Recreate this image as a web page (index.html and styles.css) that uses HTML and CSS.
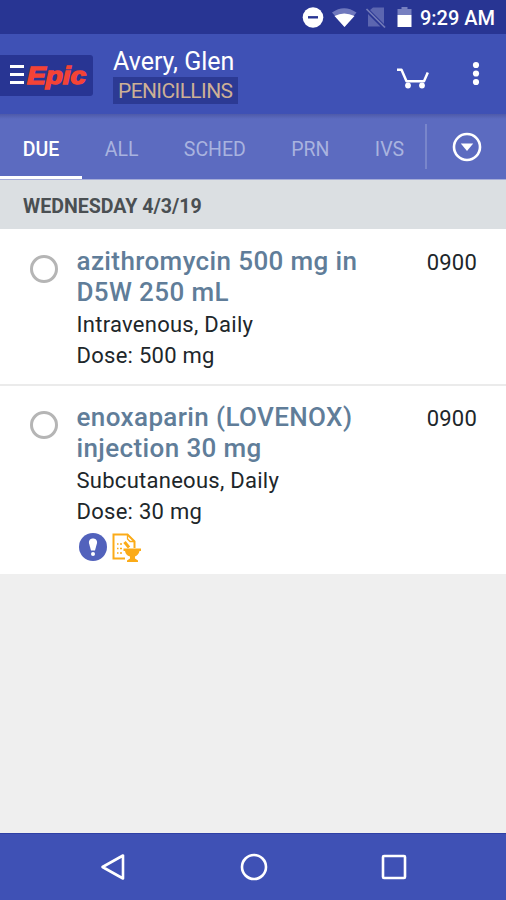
FILE: index.html
```html
<!DOCTYPE html>
<html lang="en">
<head>
  <meta charset="UTF-8" />
  <meta name="viewport" content="width=device-width, initial-scale=1.0" />
  <title>Medications Due</title>
  <link rel="stylesheet" href="styles.css">
</head>
<body>
  <div class="status-bar">
    <svg width="110" height="22" viewBox="0 0 110 22">
      <circle cx="11" cy="10.500" r="10.300" fill="#fff" />
      <path d="M6 10.300h10" stroke="#283593" stroke-width="2.400" />
      <path d="M30 5.500Q42 -3 54.500 5.500L42.500 20z" fill="#6f78bd" />
      <path d="M32.500 9Q42 4 52.500 9L42.500 20z" fill="#fff" />
      <path d="M68 3l3-2.500h11V17z M66 7l12.500 12.500H66z" fill="#5c66b0" />
      <path d="M64.500 2L83 20.500" stroke="#747cb8" stroke-width="1.700" />
      <path d="M95.500 8V2h4V0h6v2h4v6z" fill="#7780c0" />
      <path d="M95.500 8h14v12h-14z" fill="#fff" />
    </svg>
    <span class="clock">9:29 AM</span>
  </div>

  <div class="app-bar">
    <div class="logo">
      <div class="menu-lines"></div>
      <svg width="64" height="30" viewBox="0 0 64 30">
        <text class="logo-text" x="1" y="23.200" textLength="59" lengthAdjust="spacingAndGlyphs">Epic</text>
      </svg>
    </div>
    <div class="patient">
      <div class="patient-name">Avery, Glen</div>
      <div class="allergy">PENICILLINS</div>
    </div>
    <svg class="cart" width="34" height="22" viewBox="0 0 34 22" fill="none" stroke="#fff" stroke-width="2.500">
      <path d="M1 2.700h4.500l5 11.500h17.500L31.800 5.500" stroke-linejoin="round" />
      <circle cx="12" cy="18.500" r="2.900" fill="#fff" stroke="none" />
      <circle cx="26" cy="18.500" r="2.900" fill="#fff" stroke="none" />
    </svg>
    <svg class="more" width="8" height="26" viewBox="0 0 8 26" fill="#fff">
      <circle cx="4" cy="4" r="3.100" />
      <circle cx="4" cy="12.500" r="3.100" />
      <circle cx="4" cy="21" r="3.100" />
    </svg>
  </div>

  <div class="tabs">
    <div class="tab active">DUE</div>
    <div class="tab">ALL</div>
    <div class="tab">SCHED</div>
    <div class="tab">PRN</div>
    <div class="tab">IVS</div>
    <div class="divider"></div>
    <svg class="dropdown" width="30" height="30" viewBox="0 0 30 30">
      <circle cx="15" cy="15" r="13" fill="none" stroke="#fff" stroke-width="2.600" />
      <path d="M8.800 11.500h12.400L15 19z" fill="#fff" />
    </svg>
  </div>

  <div class="date-header">WEDNESDAY 4/3/19</div>

  <div class="med">
    <div class="check"></div>
    <div class="info">
      <div class="med-name">azithromycin 500 mg in<br>D5W 250 mL</div>
      <div class="detail">Intravenous, Daily</div>
      <div class="detail">Dose: 500 mg</div>
    </div>
    <div class="time">0900</div>
  </div>

  <div class="med last">
    <div class="check"></div>
    <div class="info">
      <div class="med-name">enoxaparin (LOVENOX)<br>injection 30 mg</div>
      <div class="detail">Subcutaneous, Daily</div>
      <div class="detail">Dose: 30 mg</div>
      <div class="flags">
        <svg width="28" height="28" viewBox="0 0 28 28">
          <circle cx="14" cy="14" r="14" fill="#5262bc" />
          <path d="M14 5.500c3 0 4.600 2.200 3.900 5L16 17.500h-4l-1.900-7c-.7-2.800.9-5 3.900-5z" fill="#fff" />
          <circle cx="14" cy="21" r="2" fill="#fff" />
        </svg>
        <svg width="30" height="30" viewBox="0 0 30 30" fill="none" stroke="#fbab18" stroke-width="2">
          <path d="M13 25.500H1.500V1.500h14l7 7V15" />
          <path d="M15.500 1.500v4.500l2.500 2.500h4.500" stroke-width="1.300" />
          <path d="M5 11h1.500M5 15.500h1.500M5 20h1.500M8 11h2M8 15.500h2M8 20h2" stroke-width="1.400" />
          <path d="M12.500 9l4.500 5.500" stroke-width="3" />
          <path d="M11.500 15.500h17.500v2.500h-1.500c-.5 3-2.500 4.800-4.500 5.500v2l3 2V29H15v-1.500l3-2v-2c-3-1-4.500-2.500-5-5.500h-1.500z" fill="#fbab18" stroke="none" />
        </svg>
      </div>
    </div>
    <div class="time">0900</div>
  </div>

  <div class="nav-bar">
    <svg width="28" height="30" viewBox="0 0 28 30">
      <path d="M3.500 15L24 3.500v23z" />
    </svg>
    <svg width="30" height="30" viewBox="0 0 30 30">
      <circle cx="15" cy="15" r="12" />
    </svg>
    <svg width="28" height="30" viewBox="0 0 28 30">
      <rect x="3" y="4" width="22" height="22" rx="1" />
    </svg>
  </div>
</body>
</html>
```
FILE: styles.css
```css
* {
  box-sizing: border-box;
}
body {
  margin: 0;
  height: 900px;
  display: flex;
  flex-direction: column;
  font-family: Roboto, sans-serif;
  background-color: #efefef;
  overflow: hidden;
}
svg {
  display: block;
  flex: none;
}
.status-bar {
  height: 34px;
  padding: 2px 11px 0 0;
  display: flex;
  align-items: center;
  justify-content: flex-end;
  background-color: #283593;
  color: #fff;
}
.clock {
  margin-left: 8px;
  font-size: 20px;
  font-weight: 500;
  white-space: nowrap;
}
.app-bar {
  height: 80px;
  display: flex;
  align-items: flex-start;
  background-color: #3f51b5;
}
.logo {
  width: 93px;
  height: 41px;
  margin-top: 21px;
  padding-left: 10px;
  display: flex;
  align-items: center;
  border-radius: 0 3px 3px 0;
  background-color: #283593;
}
.menu-lines {
  width: 14px;
  height: 19px;
  margin: 0 2px 2px 0;
  border-top: 3px solid #fff;
  border-bottom: 3px solid #fff;
  background: linear-gradient(#fff, #fff) center / 14px 3px no-repeat;
}
.logo-text {
  font: italic bold 24px "Liberation Sans", sans-serif;
  fill: #f44336;
  stroke: #f44336;
  stroke-width: 1.4;
}
.patient {
  margin: 12px 0 0 20px;
  width: 125px;
}
.patient-name {
  font-size: 25px;
  line-height: 31px;
  color: #fff;
  white-space: nowrap;
}
.allergy {
  height: 27px;
  padding-left: 5px;
  font-size: 21px;
  letter-spacing: -0.6px;
  line-height: 29px;
  color: #cdb095;
  background-color: #2c3a94;
}
.cart {
  margin: 33px 0 0 158px;
}
.more {
  margin: 27px 0 0 42px;
}
.tabs {
  height: 66px;
  display: flex;
  align-items: center;
  background: linear-gradient(#4e5aa9, #5c6bc0 5px);
  border-bottom: 1px solid #a5acd8;
  font-size: 19.5px;
  color: #a9b3df;
}
.tab {
  height: 65px;
  padding: 3px 22.7px 0;
  line-height: 65px;
}
.tab.active {
  width: 82px;
  color: #fff;
  font-weight: 500;
  border-bottom: 3px solid #fff;
}
.divider {
  width: 2px;
  height: 45px;
  margin-left: -2px;
  background-color: #7986cb;
}
.dropdown {
  margin-left: 25px;
}
.date-header {
  height: 49px;
  padding-left: 23px;
  font-size: 19.6px;
  font-weight: 700;
  line-height: 53px;
  color: #4a4f52;
  background-color: #dbdfe2;
}
.med {
  height: 157px;
  padding: 17px 29px 0 30px;
  display: flex;
  background-color: #fff;
  border-bottom: 2px solid #ebebeb;
}
.med.last {
  height: 188px;
  padding-top: 16px;
  border-bottom: 0;
}
.check {
  width: 28px;
  height: 28px;
  margin-top: 9px;
  border: 3px solid #b5b5b5;
  border-radius: 50%;
}
.info {
  flex: 1;
  margin-left: 18.5px;
}
.med-name {
  font-size: 26px;
  font-weight: 500;
  line-height: 31px;
  letter-spacing: 0.38px;
  color: #607d99;
}
.detail {
  font-size: 22px;
  line-height: 30px;
  letter-spacing: 0.27px;
  color: #20262a;
}
.med-name + .detail {
  margin: 2px 0 1px;
}
.time {
  font-size: 22px;
  line-height: 33px;
  letter-spacing: 0.2px;
  color: #20262a;
}
.flags {
  display: flex;
  gap: 5px;
  margin: 6px 0 0 2px;
}
.nav-bar {
  height: 67px;
  margin-top: auto;
  padding: 0 98px 0 99px;
  display: flex;
  align-items: center;
  justify-content: space-between;
  background-color: #3f51b5;
  border-top: 1px solid #2f40a5;
}
.nav-bar svg {
  fill: none;
  stroke: #fff;
  stroke-width: 2.6;
  stroke-linejoin: round;
}
```
